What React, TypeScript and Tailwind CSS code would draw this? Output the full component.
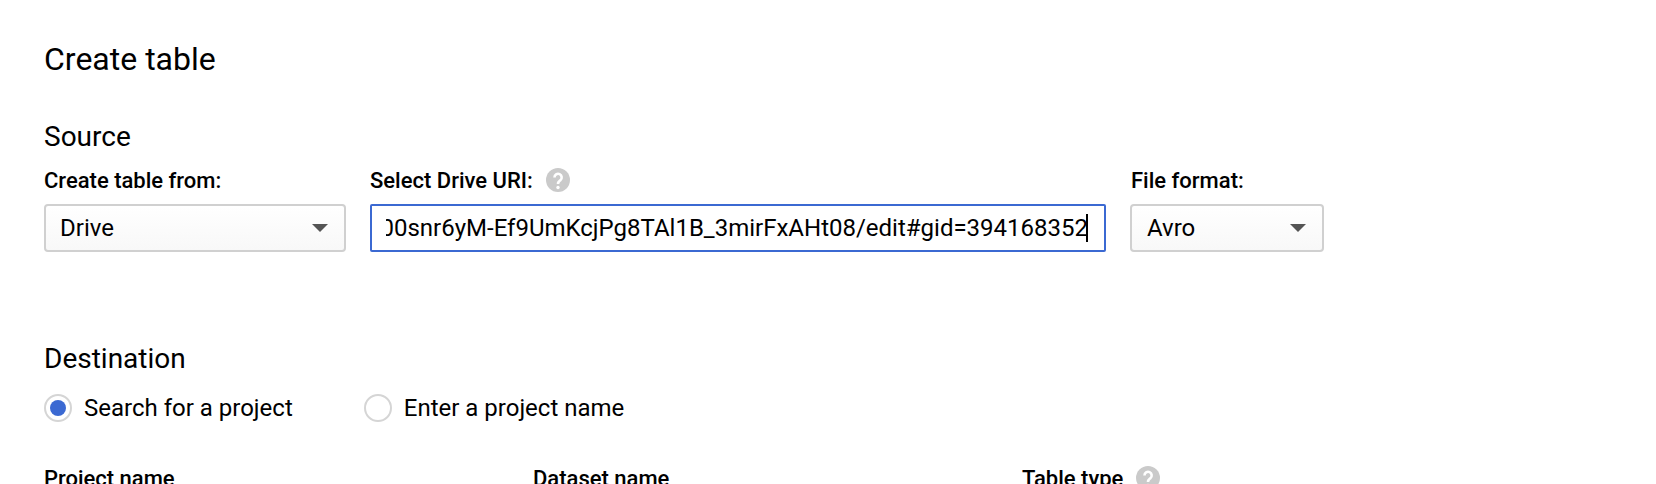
import React from 'react';

function Help() {
  return (
    <svg width="24" height="24" viewBox="0 0 24 24" className="block shrink-0">
      <circle cx="12" cy="12" r="12" fill="#cacaca" />
      <path d="M8.500 9.500a3.600 3.600 0 1 1 5.900 2.700c-1.300 1.100-2.400 1.700-2.400 3.800" fill="none" stroke="#fff" strokeWidth="2.600" />
      <circle cx="12" cy="19.500" r="1.700" fill="#fff" />
    </svg>
  );
}

function Select({ value, className }: { value: string; className: string }) {
  return (
    <button className={`flex h-12 items-center justify-between rounded-[4px] border-2 border-[#d0d0d0] bg-linear-to-b from-white to-[#f8f8f8] pr-4 text-[24px] ${className}`}>
      <span>{value}</span>
      <svg width="16" height="8" viewBox="0 0 16 8"><path d="M0 0h16L8 8z" fill="#555" /></svg>
    </button>
  );
}

function Radio({ label, checked }: { label: string; checked?: boolean }) {
  return (
    <label className="flex items-center gap-3">
      <span className="flex size-7 items-center justify-center rounded-full border-2 border-[#d5d5d5]">
        {checked && <span className="size-4 rounded-full bg-[#3b69d2]" />}
      </span>
      <span className="whitespace-nowrap pb-px leading-7">{label}</span>
    </label>
  );
}

export default function App() {
  return (
    <main className="h-[484px] overflow-hidden bg-white pl-11 font-['Roboto',sans-serif] text-black">
      <h1 className="pt-[39px] text-[32px] leading-10">Create table</h1>
      <h2 className="mt-[38px] text-[28px] leading-10">Source</h2>
      <div className="mt-[7px] flex gap-6">
        <div>
          <div className="flex h-8 items-center text-[22px] font-medium">Create table from:</div>
          <Select value="Drive" className="mt-2 w-[302px] pl-[14px]" />
        </div>
        <div>
          <div className="flex h-8 items-center gap-[13px] text-[22px] font-medium">Select Drive URI: <Help /></div>
          <div className="mt-2 flex h-12 w-[736px] items-center rounded-[2px] border-2 border-[#3b69d2] pl-[14px] pr-4">
            <div className="flex w-full items-center justify-end overflow-hidden whitespace-nowrap text-[24px]">
              <span>00snr6yM-Ef9UmKcjPg8TAl1B_3mirFxAHt08/edit#gid=394168352</span>
              <span className="-ml-0.5 h-7 w-0.5 shrink-0 bg-black" />
            </div>
          </div>
        </div>
        <div>
          <div className="flex h-8 items-center pl-px text-[22px] font-medium">File format:</div>
          <Select value="Avro" className="mt-2 w-[194px] pl-[15px]" />
        </div>
      </div>
      <h2 className="mt-[87px] text-[28px] leading-10">Destination</h2>
      <div className="mt-[13px] flex h-8 gap-[71px] text-[24px]">
        <Radio label="Search for a project" checked />
        <Radio label="Enter a project name" />
      </div>
      <div className="mt-[38px] flex text-[22px] font-medium">
        <div className="flex h-8 w-[489px] items-center">Project name</div>
        <div className="flex h-8 w-[489px] items-center">Dataset name</div>
        <div className="flex h-8 items-center gap-[13px]">Table type <Help /></div>
      </div>
    </main>
  );
}
